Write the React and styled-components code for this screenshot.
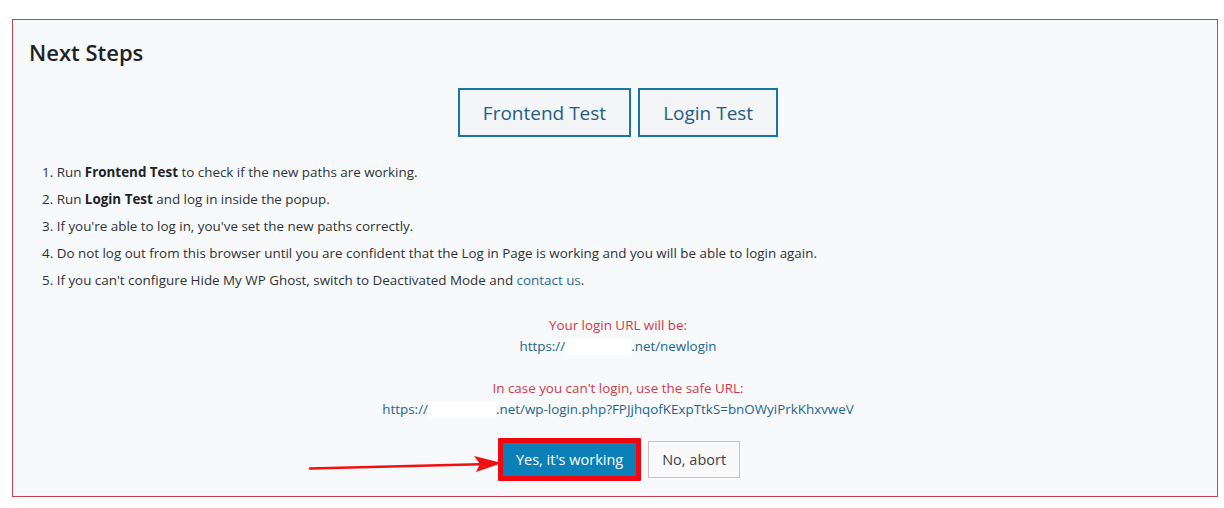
import React from 'react'
import styled, { createGlobalStyle } from 'styled-components'

const GlobalStyle = createGlobalStyle`
  body {
    margin: 0;
    background: #ffffff;
    font-family: "Open Sans", "Noto Sans", sans-serif;
  }
`

function Arrow() {
  return (
    <ArrowSvg width="194" height="22" viewBox="0 0 194 22">
      <path d="M2 16.5 L172 12.2" stroke="#f01010" strokeWidth="2.6" strokeLinecap="round" fill="none" />
      <path d="M166 4 L194 11 L168 20 L172 12 Z" fill="#f01010" />
    </ArrowSvg>
  )
}

export default function App() {
  const steps = [
    <>Run <b>Frontend Test</b> to check if the new paths are working.</>,
    <>Run <b>Login Test</b> and log in inside the popup.</>,
    <>If you're able to log in, you've set the new paths correctly.</>,
    <>Do not log out from this browser until you are confident that the Log in Page is working and you will be able to login again.</>,
    <>If you can't configure Hide My WP Ghost, switch to Deactivated Mode and <Link>contact us</Link>.</>,
  ]

  return (
    <Page>
      <GlobalStyle />
      <Panel>
        <Title>Next Steps</Title>
        <TestRow>
          <TestButton>Frontend Test</TestButton>
          <TestButton>Login Test</TestButton>
        </TestRow>
        <Steps>
          {steps.map((s, i) => (
            <Step key={i}>{i + 1}. {s}</Step>
          ))}
        </Steps>
        <UrlBlock>
          <Warn>Your login URL will be:</Warn>
          <Url>https://<Hidden $w={66} />.net/newlogin</Url>
          <Spacer />
          <Warn>In case you can't login, use the safe URL:</Warn>
          <Url>https://<Hidden $w={68} />.net/wp-login.php?FPJjhqofKExpTtkS=bnOWyiPrkKhxvweV</Url>
        </UrlBlock>
        <Actions>
          <Highlight>
            <Arrow />
            <PrimaryButton>Yes, it's working</PrimaryButton>
          </Highlight>
          <SecondaryButton>No, abort</SecondaryButton>
        </Actions>
      </Panel>
    </Page>
  )
}

const Page = styled.div`
  padding: 19px 6px 11px 12px;
`

const Panel = styled.div`
  box-sizing: border-box;
  width: 1206px;
  height: 478px;
  border: 1px solid #c8414f;
  background: #f8f9fb;
  padding: 17px 16px 0 16px;
`

const Title = styled.h2`
  margin: 0;
  font-size: 22px;
  line-height: 30px;
  font-weight: 600;
  color: #1d2327;
`

const TestRow = styled.div`
  display: flex;
  justify-content: center;
  gap: 7px;
  margin-top: 21px;
  padding-left: 6px;
`

const TestButton = styled.button`
  box-sizing: border-box;
  height: 49px;
  padding: 0 23px;
  border: 2px solid #1a74a8;
  background: #f3f5f7;
  color: #265d85;
  font-family: "Open Sans", "Noto Sans", sans-serif;
  font-size: 19px;
  cursor: pointer;
`

const Steps = styled.div`
  margin-top: 22px;
  padding-left: 13px;
`

const Step = styled.div`
  font-size: 13.4px;
  line-height: 27px;
  color: #2c3338;
  b {
    font-weight: 700;
    color: #1d2327;
  }
`

const Link = styled.a`
  color: #1f6b94;
  text-decoration: none;
`

const UrlBlock = styled.div`
  margin-top: 21px;
  text-align: center;
  font-size: 13.4px;
  line-height: 21px;
  padding-left: 6px;
`

const Warn = styled.div`
  color: #d6374a;
`

const Url = styled.div`
  color: #22658f;
`

const Hidden = styled.span`
  display: inline-block;
  width: ${(p) => p.$w}px;
  height: 16px;
  vertical-align: middle;
  background: #ffffff;
`

const Spacer = styled.div`
  height: 21px;
`

const Actions = styled.div`
  display: flex;
  align-items: center;
  justify-content: center;
  gap: 7px;
  margin-top: 18px;
  padding-left: 8px;
`

const Highlight = styled.div`
  position: relative;
  border: 5px solid #f0070f;
  border-radius: 1px;
`

const ArrowSvg = styled.svg`
  position: absolute;
  right: 100%;
  top: 9px;
  margin-right: 1px;
  display: block;
`

const PrimaryButton = styled.button`
  display: block;
  height: 33px;
  padding: 0 13px;
  border: none;
  background: #0a7fb8;
  color: #ffffff;
  font-family: "Open Sans", "Noto Sans", sans-serif;
  font-size: 14.5px;
`

const SecondaryButton = styled.button`
  box-sizing: border-box;
  height: 37px;
  padding: 0 13px;
  border: 1px solid #c3c4c7;
  background: #f9f9f9;
  color: #3c434a;
  font-family: "Open Sans", "Noto Sans", sans-serif;
  font-size: 14.5px;
`
